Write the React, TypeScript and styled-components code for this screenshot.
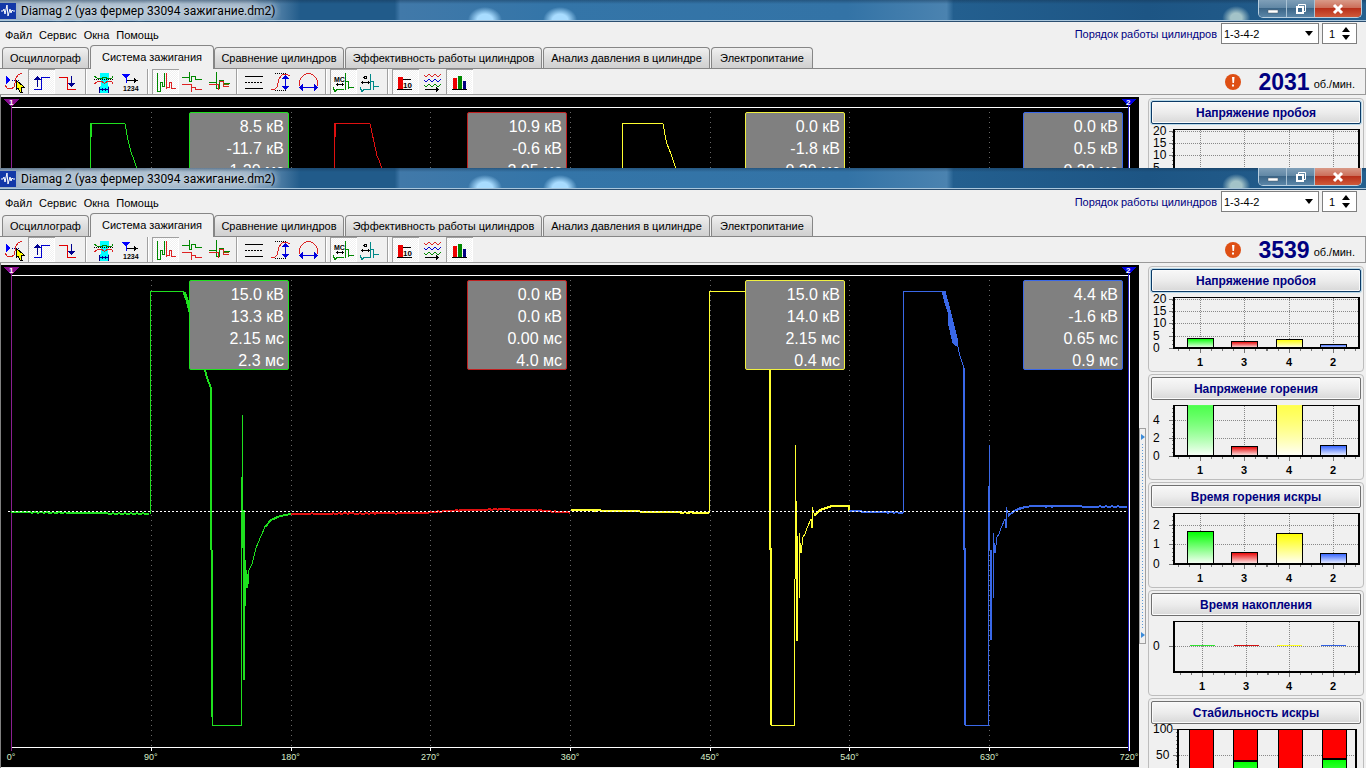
import React, { useId } from 'react';
import styled, { createGlobalStyle, css } from 'styled-components';

const GlobalStyle = createGlobalStyle`
  *, *::before, *::after { box-sizing: border-box; }
  html, body { margin: 0; height: 100%; overflow: hidden; background: #f0f0f0; }
  body { font: 11px/14px "Liberation Sans", Arial, sans-serif; color: #000; }
  button, input, select { font: inherit; color: inherit; margin: 0; }
  svg { display: block; }
`;

const UI_FONT = '"Liberation Sans", Arial, sans-serif';
const GREEN = '#1fe01f';
const RED = '#e01010';
const YELLOW = '#ffff30';
const BLUE = '#3a68e8';

/* ---------- window frame ---------- */

const Desktop = styled.div`
  display: flex;
  flex-direction: column;
  height: 100vh;
  overflow: hidden;
`;

const WindowFrame = styled.section<{ $clipped?: boolean }>`
  display: flex;
  flex-direction: column;
  overflow: hidden;
  background: #f0f0f0;
  ${({ $clipped }) => ($clipped ? css`flex: 0 0 168px;` : css`flex: 1 1 0; min-height: 0;`)}
`;

const TitleBar = styled.header`
  display: flex;
  align-items: center;
  flex: 0 0 22px;
  padding-right: 4px;
  border-bottom: 1px solid #2c4f70;
  box-shadow: inset 0 -1px 0 #a9c6dc;
  background:
    radial-gradient(ellipse 17px 13px at 35.5% 20px, #a8dcff 0 45%, transparent 100%),
    radial-gradient(ellipse 17px 13px at 41% 20px, #a8dcff 0 45%, transparent 100%),
    radial-gradient(ellipse 14px 12px at 90.5% 18px, #a3c3c8 0 40%, transparent 100%),
    linear-gradient(180deg, rgba(20, 50, 80, 0.45) 0, transparent 4px),
    linear-gradient(90deg, #9fb2c4 0, #a9bccd 10%, #9eb3c6 18%, #4b7ba3 20.5%, #215b8a 22%, #215b8a 28.9%, #4179a9 29.3%, #3475a8 40%, #3373a6 62%, #4b83b0 69.3%, #235f8f 69.8%, #1d5584 84%, #245f8e 100%);
`;

const TitleText = styled.h1`
  flex: 1;
  margin: 0 0 0 5px;
  padding-top: 2px;
  font: 400 12px/19px Roboto, "Noto Sans", sans-serif;
  text-shadow: 0 0 6px #dfe8f0, 0 0 6px #dfe8f0;
  white-space: nowrap;
`;

const CaptionButtons = styled.div`
  display: flex;
  align-self: flex-start;
  height: 18px;
  border: 1px solid #b9cfdf;
  border-top: 0;
  border-radius: 0 0 5px 5px;
  overflow: hidden;
`;

const CaptionButton = styled.button<{ $danger?: boolean }>`
  display: grid;
  place-items: center;
  width: ${({ $danger }) => ($danger ? 46 : 28)}px;
  padding: 0;
  border: 0;
  border-right: ${({ $danger }) => ($danger ? '0' : '1px solid #a9c2d4')};
  background: ${({ $danger }) =>
    $danger
      ? 'linear-gradient(#d99a88 0, #cc6f5a 45%, #b8301a 50%, #cf5a3a 100%)'
      : 'linear-gradient(#7f9fb8 0, #6288a6 45%, #3c6688 50%, #5b86a8 100%)'};
`;

/* ---------- header: menu, tabs, cylinder order ---------- */

const Header = styled.div`
  display: flex;
  justify-content: space-between;
  flex: 0 0 47px;
  border-bottom: 1px solid #868686;
`;

const HeaderLeft = styled.div`
  display: flex;
  flex-direction: column;
  justify-content: space-between;
`;

const MenuBar = styled.nav`
  display: flex;
  gap: 7px;
  padding: 5px 0 0 5px;
`;

const MenuItem = styled.button`
  padding: 0;
  border: 0;
  background: none;
  line-height: 16px;
`;

const Tabs = styled.div`
  display: flex;
  align-items: flex-end;
  padding-left: 2px;
`;

const Tab = styled.button<{ $w: number; $active?: boolean }>`
  width: ${({ $w }) => $w}px;
  height: ${({ $active }) => ($active ? 24 : 21)}px;
  margin: 0 ${({ $active }) => ($active ? 0 : 1)}px ${({ $active }) => ($active ? -1 : 0)}px 0;
  padding: 0 0 ${({ $active }) => ($active ? 2 : 0)}px;
  border: 1px solid #868686;
  border-bottom: 0;
  border-radius: 4px 4px 0 0;
  background: ${({ $active }) => ($active ? '#f0f0f0' : 'linear-gradient(#f0f0f0, #dedede 50%, #d0d0d0)')};
  white-space: nowrap;
`;

const OrderBar = styled.div`
  display: flex;
  align-items: center;
  align-self: flex-start;
  height: 21px;
  margin: 1px 9px 0 0;
`;

const OrderLabel = styled.label`
  margin-right: 4px;
  color: #000080;
`;

const SelectBox = styled.div`
  position: relative;
  width: 98px;
  height: 21px;
  margin-right: 3px;

  svg { position: absolute; right: 5px; top: 8px; pointer-events: none; }
`;

const OrderSelect = styled.select`
  appearance: none;
  width: 100%;
  height: 100%;
  padding: 0 2px;
  border: 1px solid #7f7f7f;
  border-radius: 0;
  background: #fff;
  line-height: 18px;
`;

const Spinner = styled.div`
  display: flex;
  width: 35px;
  height: 21px;
  border: 1px solid #7f7f7f;
  background: #fff;
`;

const SpinnerInput = styled.input`
  flex: 1;
  min-width: 0;
  padding: 0 0 0 6px;
  border: 0;
  background: none;
`;

const SpinnerArrows = styled.div`
  display: flex;
  flex-direction: column;
  justify-content: center;
  gap: 3px;
  width: 19px;
`;

const ArrowButton = styled.button`
  display: grid;
  place-items: center;
  padding: 0;
  border: 0;
  background: none;
`;

/* ---------- toolbar ---------- */

const Toolbar = styled.div`
  display: flex;
  flex: 0 0 26px;
  padding-left: 1px;
  border-bottom: 1px solid #9a9a9a;
  border-right: 1px solid #9a9a9a;
`;

const ToolButton = styled.button<{ $on?: boolean }>`
  width: 27px;
  height: 25px;
  padding: 0;
  border: 0;
  background: ${({ $on }) => ($on ? 'repeating-conic-gradient(#fff 0 25%, #f1f1f1 0 50%) 0 0 / 2px 2px' : 'none')};
  box-shadow: ${({ $on }) => ($on ? 'inset 1px 1px 0 #a0a0a0, inset -1px -1px 0 #fff' : 'none')};
`;

const Separator = styled.div`
  width: 8px;
  height: 25px;
  padding-left: 3px;

  &::before {
    content: "";
    display: block;
    width: 2px;
    height: 25px;
    border-left: 1px solid #a0a0a0;
    border-right: 1px solid #fff;
  }
`;

const Rpm = styled.output`
  display: flex;
  align-items: center;
  margin-left: auto;
  padding-right: 10px;

  svg { margin-right: 17px; }
`;

const RpmValue = styled.strong`
  margin-right: 4px;
  padding-top: 1px;
  font: 700 23px/24px ${UI_FONT};
  color: #000080;
`;

const RpmUnit = styled.span`
  padding-top: 4px;
`;

/* ---------- body ---------- */

const Body = styled.div`
  display: flex;
  flex: 1 0 auto;
  padding: 2px 2px 0 0;
  border-left: 1px solid #808080;
`;

const Scope = styled.div`
  position: relative;
  flex: 1;
  min-width: 0;
  overflow: hidden;
  align-self: flex-start;
  background: #000;
`;

const Axis = styled.div`
  display: flex;
  justify-content: space-between;
  height: 16px;
  margin: 0 -10px;
  color: #d8ecc8;
  font-size: 9px;
  line-height: 12px;
  text-align: center;

  span { width: 40px; }
`;

const Readouts = styled.div`
  position: absolute;
  top: 15px;
  left: 10px;
  right: 16px;
  display: grid;
  grid-template-columns: repeat(4, 1fr);
  justify-items: end;
`;

const Readout = styled.div<{ $color: string }>`
  width: 100px;
  height: 90px;
  padding: 3px 4px 0 0;
  border: 1px solid ${({ $color }) => $color};
  border-radius: 2px;
  background: #808080;
  color: #fff;
  font-size: 16px;
  line-height: 22px;
  text-align: right;
`;

const SplitterTrack = styled.div`
  flex: 0 0 9px;
  padding-top: 163px;
`;

const Splitter = styled.div`
  display: flex;
  flex-direction: column;
  align-items: center;
  justify-content: space-between;
  width: 7px;
  height: 216px;
  padding: 5px 0;
  border: 1px solid #a0a0a0;
  background: #f0f0f0;

  &::before {
    content: "";
    order: 1;
    flex: 1;
    width: 1px;
    margin: 4px 0;
    background: repeating-linear-gradient(#5a9ad8 0 1px, transparent 1px 3px);
  }
  svg:last-child { order: 2; }
`;

const Sidebar = styled.aside`
  display: flex;
  flex-direction: column;
  flex: 0 0 216px;
  gap: 2px;
  padding-top: 1px;
`;

const Group = styled.section`
  flex: 0 0 106px;
  padding: 2px;
  border: 1px solid #bdbdbd;
  border-radius: 4px;
`;

const GroupButton = styled.button<{ $focused?: boolean }>`
  display: block;
  width: 100%;
  height: 23px;
  padding: 0;
  border: 1px solid ${({ $focused }) => ($focused ? '#0b3a66' : '#707070')};
  border-radius: 2px;
  background: linear-gradient(#f8f8f8, #ececec 50%, #d8d8d8);
  box-shadow: ${({ $focused }) => ($focused ? '0 0 0 1px #b8d8e8, ' : '')}inset 0 0 0 1px #fafafa;
  color: #000080;
  font-weight: 700;
  font-size: 12px;
`;

/* ---------- toolbar icons, 27 x 25 each ---------- */

type IconName =
  | 'curve' | 'rise' | 'fall' | 'sync' | 'order' | 'row' | 'raster' | 'overlay' | 'lines'
  | 'vertical' | 'horizontal' | 'ms' | 'deg' | 'values' | 'waves' | 'bars';

const NAVY = '#000090';

const icons: Record<IconName, React.ReactNode> = {
  curve: (
    <>
      <path d="M5 7v8l5-4z" fill="#00f" stroke="none" />
      <path d="M11 11.500h8" stroke={NAVY} strokeDasharray="1 1" />
      <path d="M4 16l2 3 4 1 3-2 1-4 1-5 2-3 4-2" stroke="#d22" />
      <path d="M15 11v10l2-2 2 4h2l-1-5h3z" fill="#ff0" stroke="#000" />
    </>
  ),
  rise: (
    <>
      <path d="M6 20.500h7.500v-12H22" stroke="#0000d0" />
      <path d="M9.500 10v8" stroke={NAVY} />
      <path d="M9.500 7l3.500 4H6z" fill={NAVY} />
    </>
  ),
  fall: (
    <>
      <path d="M4 8.500h8.500v12H21" stroke="#e00000" />
      <path d="M16.500 7v8" stroke={NAVY} />
      <path d="M16.500 18l3.500-4h-7z" fill={NAVY} />
    </>
  ),
  sync: (
    <>
      <path d="M10 4h9v5h-1v8h1v7h-9v-7h1V9h-1z" fill="#0ff" />
      <path d="M4 7l3 2 4 1 3-2h1l3 2 4-1 1-2" stroke="#080" />
      <path d="M4 15l3-2 4-1 3 2h1l3-2 4 1 1 2" stroke="#d22" />
      <path d="M4 10.500h19" stroke="#000" strokeDasharray="1 1" />
      <path d="M10 20.500h8M12.500 19v3M15.500 19v3M9.500 18v6M18.500 18v6" stroke={NAVY} />
    </>
  ),
  order: (
    <>
      <path d="M5 5h8l-4 5z" fill="#00f" />
      <path d="M9.500 9v5" stroke="#00f" />
      <path d="M10 11.500h8" stroke="#000" />
      <path d="M17 9l4 2.500-4 2.500z" fill="#000" />
      <text x="6" y="22" fontSize="7" fontWeight="700" fill="#000">1234</text>
    </>
  ),
  row: (
    <>
      <path d="M5.500 4v18h3V13.500h2v4h2V4" stroke="#080" />
      <path d="M14.500 13v7M14.500 4v14h3v-5h2v6h4" stroke="#d22" />
    </>
  ),
  raster: (
    <>
      <path d="M3 8.500h7M10.500 3v9.500h2v-5h4v3h6" stroke="#080" />
      <path d="M3 15.500h9.500v7M12.500 18.500h4v2h6" stroke="#d22" />
    </>
  ),
  overlay: (
    <>
      <path d="M3 13.500h7M10.500 3v16h3v-8h4v3h6" stroke="#080" />
      <path d="M3 15.500h9.500v5M13 12.500h4v5h6" stroke="#d22" />
      <path d="M17 15.500h6" stroke="#850" />
    </>
  ),
  lines: (
    <>
      <path d="M4 7.500h18M4 19.500h18" stroke="#000" />
      <path d="M4 13.500h18" stroke="#000" strokeDasharray="2 1" />
    </>
  ),
  vertical: (
    <>
      <path d="M7 4.500h12M7 21.500h12" stroke="#000" strokeDasharray="1 1" />
      <path d="M3 20l3 1 3-3 2-8 3-4 4-1 4 2" stroke="#d22" />
      <path d="M17.500 8v11" stroke="#00d" />
      <path d="M17.500 6l3.500 4h-7zM17.500 21l3.500-4h-7z" fill="#00d" />
    </>
  ),
  horizontal: (
    <>
      <path d="M5 17l-1-4 2-4 3-3 4-2h1l4 2 3 3 2 4-1 4" stroke="#d22" />
      <path d="M7 18.500h13" stroke="#00d" />
      <path d="M4 18.500l4-3.500v7zM23 18.500l-4-3.500v7z" fill="#00d" />
    </>
  ),
  ms: (
    <>
      <path d="M3 18.500l2 4 2-2h6.500M15.500 4v17M15.500 12h3v8M19 18.500h5" stroke="#080" />
      <text x="4" y="13" fontSize="7" fontWeight="700" fill="#000">МС</text>
      <path d="M6 15.500h8M7.500 14v3M12.500 14v3" stroke="#000" />
    </>
  ),
  deg: (
    <>
      <path d="M3 18.500l2 4 2-2h6.500v-16M13.500 12.500h3v8M17 17.500h5" stroke="#088" />
      <circle cx="8.500" cy="8.500" r="1.500" stroke="#000" />
      <path d="M4 13.500h9M5.500 12v3M11.500 12v3" stroke="#000" />
    </>
  ),
  values: (
    <>
      <path d="M6 8h5v12H6z" fill="#e00" />
      <path d="M11 10.500h8M5 20.500h15" stroke="#000" />
      <text x="11" y="19" fontSize="8" fontWeight="700" fill="#000">10</text>
    </>
  ),
  waves: (
    <>
      <path d="M5 6l2 2 3-3 3 3 3-3 3 3 3-3" stroke="#d22" />
      <path d="M5 11l2 2 3-3 3 3 3-3 3 3 3-3" stroke="#00c" />
      <path d="M5 16l2 2 3-3 3 3 3-3 3 3 3-3" stroke="#080" />
      <path d="M6 20.500h13M17 18.500l2 2-2 2" stroke="#000" />
    </>
  ),
  bars: (
    <>
      <path d="M7 9h4v11H7z" fill="#e00" />
      <path d="M12 7h4v13h-4z" fill="#080" />
      <path d="M17 12h3v8h-3z" fill="#000080" />
      <path d="M6 20.500h15" stroke="#000" />
    </>
  ),
};

const toolGroups: { name: IconName; label: string; on?: boolean }[][] = [
  [
    { name: 'curve', label: 'Уровень' },
    { name: 'rise', label: 'Фронт', on: true },
    { name: 'fall', label: 'Спад' },
  ],
  [
    { name: 'sync', label: 'Синхронизация' },
    { name: 'order', label: 'Порядок' },
  ],
  [
    { name: 'row', label: 'Парад', on: true },
    { name: 'raster', label: 'Растр' },
    { name: 'overlay', label: 'Наложение' },
  ],
  [
    { name: 'lines', label: 'Линии' },
    { name: 'vertical', label: 'По вертикали' },
    { name: 'horizontal', label: 'По горизонтали' },
  ],
  [
    { name: 'ms', label: 'Миллисекунды', on: true },
    { name: 'deg', label: 'Градусы' },
  ],
  [
    { name: 'values', label: 'Значения', on: true },
    { name: 'waves', label: 'Кадры' },
    { name: 'bars', label: 'Гистограммы', on: true },
  ],
];

const ToolIcon = ({ name }: { name: IconName }) => (
  <svg width="27" height="25" viewBox="0 0 27 25" fill="none" shapeRendering="crispEdges" aria-hidden="true">
    {icons[name]}
  </svg>
);

/* ---------- oscillogram ---------- */

interface Trace { color: string; d: string; width?: number; fill?: string }

const noise = (x0: number, x1: number, level: (t: number) => number, amp = 1) => {
  const points: string[] = [];
  for (let x = x0; x <= x1; x += 3) {
    const jitter = ((x * 7919) % 13) / 13 - 0.5;
    points.push(`${x},${(level((x - x0) / (x1 - x0)) + jitter * amp).toFixed(1)}`);
  }
  return `M${points.join('L')}`;
};

/* ringing after the spark ends, starting at x */
const ringing = (x: number) =>
  `M${x} 430V365L${x + 2} 385L${x + 4} 369L${x + 6} 366L${x + 8} 360L${x + 12} 351L${x + 13} 360V339` +
  `L${x + 16} 348L${x + 19} 344L${x + 26} 340L${x + 35} 338`;

const idleTraces: Trace[] = [
  { color: GREEN, d: 'M90.500 200V123.500H125L128 140L131 152L134 160L138 172' },
  { color: GREEN, width: 2, d: 'M91 123V137' },
  { color: RED, d: 'M334.500 200V123.500H370L374 142L377 156L379 160L383 172' },
  { color: RED, width: 2, d: 'M335 123V137' },
  { color: YELLOW, d: 'M622.500 200V123.500H663L666 140L667 144L671 154L677 172' },
];

const loadTraces: Trace[] = [
  { color: GREEN, width: 2, d: noise(11, 150, (t) => 344 + 2 * t) },
  { color: GREEN, d: 'M150.500 346V123.500H183L189 140' },
  { color: GREEN, width: 3, d: 'M184 124L187 132L190 144' },
  { color: GREEN, width: 2, d: 'M204 198L207 210L211 220V382' },
  { color: GREEN, width: 2, d: 'M212 382V549' },
  { color: GREEN, d: 'M212.500 549V557.500H241.500V309' },
  { color: GREEN, d: 'M242.500 247V350' },
  { color: GREEN, width: 2, d: 'M242 309V380' },
  { color: GREEN, width: 2, d: 'M244 342V512' },
  { color: GREEN, d: 'M245.500 438V392L247 420L249 402L252 396L256 380L261 368L265 359L271 352L280 348L291 346' },
  { color: GREEN, width: 3, d: 'M247 406V416' },
  { color: GREEN, width: 2, d: 'M265 359L271 352L280 348L291 346' },
  { color: RED, width: 2, d: noise(291, 429, (t) => 346 - 1 * t) },
  { color: RED, width: 2, d: noise(429, 571, (t) => 344 - 3 * Math.sin(t * 3) + t) },
  { color: YELLOW, width: 2, d: noise(571, 709, (t) => 342 + 3 * t) },
  { color: YELLOW, d: 'M709.500 345V123.500H760' },
  { color: YELLOW, width: 2, d: 'M770 198V382' },
  { color: YELLOW, width: 2, d: 'M771 380V557' },
  { color: YELLOW, d: 'M771 557.500H794.500V411' },
  { color: YELLOW, d: 'M795.500 277V411' },
  { color: YELLOW, width: 2, d: 'M796 333V411' },
  { color: YELLOW, width: 2, d: 'M797 368V473' },
  { color: YELLOW, d: ringing(799) },
  { color: YELLOW, width: 2, d: 'M814 348L820 342L832 338H849V343' },
  { color: BLUE, width: 2, d: noise(849, 903, (t) => 343 + 2 * t) },
  { color: BLUE, d: 'M903.500 345V123.500H943' },
  { color: BLUE, fill: BLUE, d: 'M942 123H945L950 142L957 170L957 178L953 175L949 158L948 144L945 135Z' },
  { color: BLUE, d: 'M957 175L960 188L964 200' },
  { color: BLUE, width: 2, d: 'M964 200V382' },
  { color: BLUE, width: 2, d: 'M965 380V557' },
  { color: BLUE, d: 'M965 557.500H988.500V318' },
  { color: BLUE, d: 'M989.500 277V382' },
  { color: BLUE, width: 2, d: 'M989 318V382' },
  { color: BLUE, width: 2, d: 'M991 382V472' },
  { color: BLUE, d: ringing(993) },
  { color: BLUE, width: 2, d: 'M1008 348L1014 343L1022 340L1031 338' },
  { color: BLUE, width: 2, d: noise(1031, 1129, (t) => 338 + t) },
];

const gridX = [151, 291, 430, 570, 710, 849, 989];

const Oscillogram = ({ traces }: { traces: Trace[] }) => (
  <svg width="100%" height="486" viewBox="1 97 1138 486" preserveAspectRatio="none" fill="none" shapeRendering="crispEdges">
    {gridX.map((x) => (
      <path key={x} d={`M${x + 0.5} 112V579`} stroke="#686868" strokeDasharray="1 4" />
    ))}
    <path d="M11 107.500H1129M11 579.500H1130" stroke="#fff" />
    <path d={gridX.map((x) => `M${x + 0.5} 580v3`).join('')} stroke="#fff" />
    <path d="M11.500 100V583" stroke="#8a1f90" />
    {traces.map((t, i) => (
      <path key={i} d={t.d} stroke={t.color} strokeWidth={t.width ?? 1} fill={t.fill ?? 'none'} />
    ))}
    <path d="M8 343.500H1130" stroke="#fff" strokeDasharray="2 2" />
    <path d="M1128.500 100V583" stroke="#2020c0" />
    <path d="M1129.500 107V583" stroke="#fff" />
    <path d="M4 99H19L11.500 107Z" fill="#8a0f90" />
    <path d="M1121 99H1136L1129 107Z" fill="#0000e0" />
    <text x="9" y="105" fontSize="8" fontWeight="700" fill="#fff">1</text>
    <text x="1126" y="105" fontSize="8" fontWeight="700" fill="#fff">2</text>
  </svg>
);

const angles = ['0°', '90°', '180°', '270°', '360°', '450°', '540°', '630°', '720°'];

/* ---------- histograms ---------- */

type Hue = 'green' | 'red' | 'yellow' | 'blue';
const hueColor: Record<Hue, string> = { green: '#0f0', red: '#e80000', yellow: '#ff0', blue: '#3060ff' };
const hues: Hue[] = ['green', 'red', 'yellow', 'blue'];

interface Chart {
  title: string;
  ticks: [string, number][];
  bars?: number[];
  clip?: boolean;
  flat?: boolean;
  split?: (number | null)[];
}

const BAR_X = [37, 81, 126, 170];
const BASE = 56;

const Histogram = ({ chart }: { chart: Chart }) => {
  const id = useId();
  const left = chart.split ? 26 : 22;
  const right = chart.split ? 206 : 209;
  const centers = chart.flat ? [51, 95, 138, 182] : [49, 93, 138, 182];
  return (
    <svg width="210" height="77" viewBox="0 0 210 77" fontSize="12" role="img" aria-label={chart.title}>
      <defs>
        {hues.map((h) => (
          <linearGradient key={h} id={`${id}${h}`} x1="0" y1="0" x2="0" y2="1">
            <stop offset="0" stopColor={hueColor[h]} stopOpacity={chart.clip && h !== 'red' && h !== 'blue' ? 0.7 : 1} />
            <stop offset="1" stopColor="#fff" />
          </linearGradient>
        ))}
      </defs>
      <g shapeRendering="crispEdges" fill="none">
        {chart.ticks.map(([label, y]) => (
          <path key={label} d={`M${left} ${y + 0.5}H${right}`} stroke="#888" strokeDasharray="1 1" />
        ))}
        {centers.map((x) => (
          <path key={x} d={`M${x + 0.5} 6V${BASE}`} stroke="#888" strokeDasharray="1 1" />
        ))}
        {chart.ticks.map(([label, y]) => (
          <path key={label} d={`M${left - 4} ${y + 0.5}h4`} stroke="#777" />
        ))}
        {!chart.flat && <path d={`M${left - 0.5} 8V${BASE}`} stroke="#777" strokeDasharray="1 3" />}
        {centers.map((x) => (
          <path key={x} d={`M${x + 0.5} 57v4M${x - 10.500} 57v2M${x + 11.500} 57v2M${x - 21.500} 57v2M${x + 22.500} 57v2`} stroke="#777" />
        ))}
        {chart.bars?.map((top, i) => (
          <React.Fragment key={i}>
            <rect x={BAR_X[i] - 0.5} y={top + 0.5} width="26" height={BASE - top} fill="#fff" />
            <rect x={BAR_X[i] - 0.5} y={top + 0.5} width="26" height={BASE - top} fill={`url(#${id}${hues[i]})`} stroke="#000" />
          </React.Fragment>
        ))}
        {chart.flat &&
          centers.map((x, i) => (
            <path key={x} d={`M${x - 12} 29.500h25`} stroke={['#30e030', '#d01010', '#ffff20', '#3060e0'][i]} />
          ))}
        {chart.split?.map((cut, i) => (
          <React.Fragment key={i}>
            <rect x={BAR_X[i] + 1.500} y="5.500" width="24" height="80" fill="#f00" stroke="#000" />
            {cut !== null && (
              <>
                <rect x={BAR_X[i] + 1.500} y={cut + 0.5} width="24" height="50" fill={`url(#${id}green)`} stroke="#000" />
                <path d={`M${BAR_X[i] + 1} ${cut}h25`} stroke="#000" strokeWidth="2" />
              </>
            )}
          </React.Fragment>
        ))}
        <path d={`M${left} 5.500H${right}`} stroke="#000" />
        {chart.clip && (
          <>
            <path d="M37 5.500H62" stroke="#58ff58" />
            <path d="M126 5.500H151" stroke="#ffff58" />
          </>
        )}
        <path d={`M${left + 1} 5V${chart.split ? 80 : 57}M${right - 1} 5V${chart.split ? 80 : 57}`} stroke="#000" strokeWidth="2" />
        {!chart.split && <path d={`M${left} 56H${right}`} stroke="#000" strokeWidth="2" />}
      </g>
      {chart.ticks.map(([label, y]) => (
        <text key={label} x={chart.split && label !== '100' ? 5 : 2} y={y + 4}>{label}</text>
      ))}
      {(chart.bars || chart.flat) &&
        centers.map((x, i) => (
          <text key={x} x={x} y="74" fontSize="11" fontWeight="700" textAnchor="middle">{['1', '3', '4', '2'][i]}</text>
        ))}
    </svg>
  );
};

const idleCharts: Chart[] = [
  { title: 'Напряжение пробоя', ticks: [['20', 7], ['15', 19], ['10', 31], ['5', 44]] },
];

const loadCharts: Chart[] = [
  {
    title: 'Напряжение пробоя',
    ticks: [['20', 7], ['15', 19], ['10', 31], ['5', 44], ['0', 56]],
    bars: [46, 49, 47, 52],
  },
  { title: 'Напряжение горения', ticks: [['4', 20], ['2', 38], ['0', 56]], bars: [5, 46, 5, 45], clip: true },
  { title: 'Время горения искры', ticks: [['2', 17], ['1', 36], ['0', 56]], bars: [23, 44, 25, 45] },
  { title: 'Время накопления', ticks: [['0', 30]], flat: true },
  { title: 'Стабильность искры', ticks: [['100', 5], ['50', 31]], split: [null, 37, null, 35] },
];

/* ---------- application window ---------- */

const menu = ['Файл', 'Сервис', 'Окна', 'Помощь'];
const tabs: [string, number][] = [
  ['Осциллограф', 87],
  ['Система зажигания', 124],
  ['Сравнение цилиндров', 130],
  ['Эффективность работы цилиндров', 197],
  ['Анализ давления в цилиндре', 167],
  ['Электропитание', 102],
];
const readoutColors = [GREEN, '#c02020', '#f0f040', BLUE];

const Triangle = ({ d, w = 9, h = 5, fill = '#000' }: { d: string; w?: number; h?: number; fill?: string }) => (
  <svg width={w} height={h} viewBox={`0 0 ${w} ${h}`} aria-hidden="true"><path d={d} fill={fill} /></svg>
);

interface AppWindowProps {
  rpm: number;
  readouts: string[][];
  traces: Trace[];
  charts: Chart[];
  clipped?: boolean;
}

const AppWindow = ({ rpm, readouts, traces, charts, clipped }: AppWindowProps) => {
  const orderId = useId();
  return (
    <WindowFrame $clipped={clipped}>
      <TitleBar>
        <svg width="16" height="16" viewBox="0 0 16 16" aria-hidden="true">
          <rect width="16" height="16" fill="#1238a8" />
          <path d="M1 8h2l1-2 1 5 2-9 1 11 2-7 1 4 1-3 1 1h2" stroke="#fff" fill="none" />
        </svg>
        <TitleText>Diamag 2 (уаз фермер 33094 зажигание.dm2)</TitleText>
        <CaptionButtons>
          <CaptionButton aria-label="Свернуть">
            <svg width="12" height="12" viewBox="0 0 12 12"><path d="M1 7h10v3H1z" fill="#fff" stroke="#4a5a68" strokeWidth="0.5" /></svg>
          </CaptionButton>
          <CaptionButton aria-label="Восстановить">
            <svg width="12" height="12" viewBox="0 0 12 12" fill="none" stroke="#fff">
              <path d="M3.500 3V1.500h7v7H9" /><path d="M2 4h6v6H2z" strokeWidth="2" />
            </svg>
          </CaptionButton>
          <CaptionButton aria-label="Закрыть" $danger>
            <svg width="12" height="12" viewBox="0 0 12 12"><path d="M2 2l8 8M10 2l-8 8" stroke="#fff" strokeWidth="3" /></svg>
          </CaptionButton>
        </CaptionButtons>
      </TitleBar>

      <Header>
        <HeaderLeft>
          <MenuBar>{menu.map((m) => <MenuItem key={m}>{m}</MenuItem>)}</MenuBar>
          <Tabs role="tablist">
            {tabs.map(([label, w], i) => (
              <Tab key={label} role="tab" aria-selected={i === 1} $w={w} $active={i === 1}>{label}</Tab>
            ))}
          </Tabs>
        </HeaderLeft>
        <OrderBar>
          <OrderLabel htmlFor={orderId}>Порядок работы цилиндров</OrderLabel>
          <SelectBox>
            <OrderSelect id={orderId} defaultValue="1-3-4-2">
              <option>1-3-4-2</option>
              <option>1-2-4-3</option>
            </OrderSelect>
            <Triangle d="M0 0h8L4 5z" />
          </SelectBox>
          <Spinner>
            <SpinnerInput aria-label="Номер цилиндра" defaultValue="1" />
            <SpinnerArrows>
              <ArrowButton aria-label="Больше"><Triangle d="M0 5h8L4 0z" /></ArrowButton>
              <ArrowButton aria-label="Меньше"><Triangle d="M0 0h8L4 5z" /></ArrowButton>
            </SpinnerArrows>
          </Spinner>
        </OrderBar>
      </Header>

      <Toolbar>
        {toolGroups.map((group, g) => (
          <React.Fragment key={g}>
            {g > 0 && <Separator />}
            {group.map((tool) => (
              <ToolButton key={tool.name} $on={tool.on} aria-label={tool.label} aria-pressed={!!tool.on}>
                <ToolIcon name={tool.name} />
              </ToolButton>
            ))}
          </React.Fragment>
        ))}
        <Rpm>
          <svg width="16" height="16" viewBox="0 0 16 16" aria-hidden="true">
            <circle cx="8" cy="8" r="8" fill="#de4f14" />
            <path d="M7 3h2.500l-.5 6H7.500zM7 10.500h2v2H7z" fill="#fff" />
          </svg>
          <RpmValue>{rpm}</RpmValue>
          <RpmUnit>об./мин.</RpmUnit>
        </Rpm>
      </Toolbar>

      <Body>
        <Scope>
          <Oscillogram traces={traces} />
          {!clipped && <Axis>{angles.map((a) => <span key={a}>{a}</span>)}</Axis>}
          <Readouts>
            {readouts.map((lines, i) => (
              <Readout key={i} $color={readoutColors[i]}>
                {lines.map((line, n) => <div key={n}>{line}</div>)}
              </Readout>
            ))}
          </Readouts>
        </Scope>
        <SplitterTrack>
          <Splitter>
            <Triangle w={4} h={6} d="M0 0l4 3-4 3z" fill="#3a8ad8" />
            <Triangle w={4} h={6} d="M0 0l4 3-4 3z" fill="#3a8ad8" />
          </Splitter>
        </SplitterTrack>
        <Sidebar>
          {charts.map((chart, i) => (
            <Group key={chart.title}>
              <GroupButton $focused={i === 0}>{chart.title}</GroupButton>
              <Histogram chart={chart} />
            </Group>
          ))}
        </Sidebar>
      </Body>
    </WindowFrame>
  );
};

const App = () => (
  <Desktop>
    <GlobalStyle />
    <AppWindow
      clipped
      rpm={2031}
      traces={idleTraces}
      charts={idleCharts}
      readouts={[
        ['8.5 кВ', '-11.7 кВ', '1.20 мс'],
        ['10.9 кВ', '-0.6 кВ', '2.05 мс'],
        ['0.0 кВ', '-1.8 кВ', '0.20 мс'],
        ['0.0 кВ', '0.5 кВ', '0.20 мс'],
      ]}
    />
    <AppWindow
      rpm={3539}
      traces={loadTraces}
      charts={loadCharts}
      readouts={[
        ['15.0 кВ', '13.3 кВ', '2.15 мс', '2.3 мс'],
        ['0.0 кВ', '0.0 кВ', '0.00 мс', '4.0 мс'],
        ['15.0 кВ', '14.0 кВ', '2.15 мс', '0.4 мс'],
        ['4.4 кВ', '-1.6 кВ', '0.65 мс', '0.9 мс'],
      ]}
    />
  </Desktop>
);

export default App;
